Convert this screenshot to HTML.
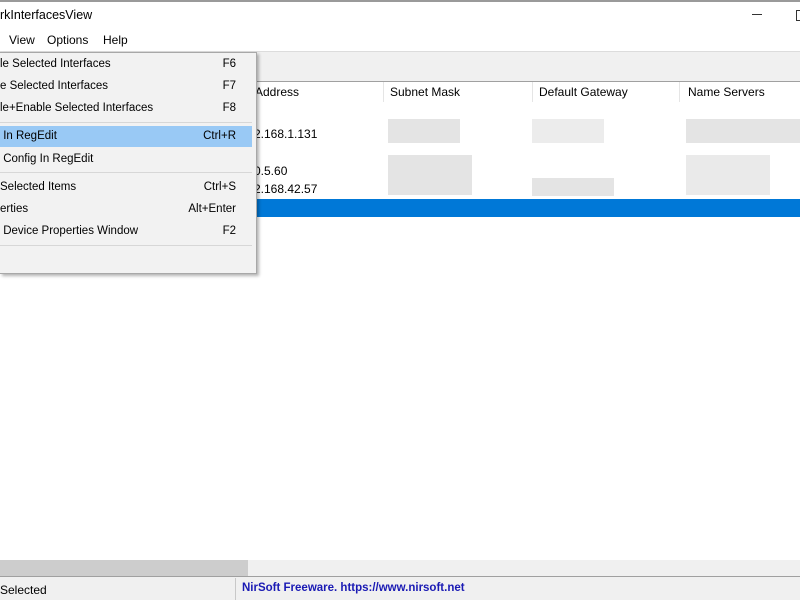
<!DOCTYPE html>
<html><head><style>
body{margin:0;width:800px;height:600px;overflow:hidden;background:#fff;font-family:"Liberation Sans",sans-serif;font-size:12px;color:#000;position:relative}
.a{position:absolute;white-space:nowrap}
.blk{position:absolute;background:#e4e4e4}
.mi{position:absolute;left:0;width:252px;height:20px;line-height:20px;font-size:11.5px}
.mi .k{position:absolute;right:16px;top:0}
</style></head><body>
<div class="a" style="left:0;top:0;width:800px;height:2px;background:#9a9a9a"></div>
<div class="a" style="left:0;top:8px;font-size:12.5px">rkInterfacesView</div>
<div class="a" style="left:752px;top:14px;width:10px;height:1px;background:#333"></div>
<div class="a" style="left:796px;top:10px;width:8px;height:9px;border:1px solid #333"></div>
<div class="a" style="left:9px;top:33px">View</div>
<div class="a" style="left:47px;top:33px">Options</div>
<div class="a" style="left:103px;top:33px">Help</div>
<div class="a" style="left:0;top:51px;width:800px;height:29px;background:#f0f0f0;border-top:1px solid #dcdcdc;border-bottom:1px solid #a0a0a0"></div>
<div class="a" style="left:255px;top:85px">Address</div>
<div class="a" style="left:383px;top:82px;width:1px;height:20px;background:#e5e5e5"></div>
<div class="a" style="left:390px;top:85px">Subnet Mask</div>
<div class="a" style="left:532px;top:82px;width:1px;height:20px;background:#e5e5e5"></div>
<div class="a" style="left:539px;top:85px">Default Gateway</div>
<div class="a" style="left:679px;top:82px;width:1px;height:20px;background:#e5e5e5"></div>
<div class="a" style="left:688px;top:85px">Name Servers</div>
<div class="a" style="left:254px;top:127px">2.168.1.131</div>
<div class="a" style="left:254px;top:164px">0.5.60</div>
<div class="a" style="left:254px;top:182px">2.168.42.57</div>
<div class="blk" style="left:388px;top:119px;width:72px;height:24px"></div>
<div class="blk" style="left:532px;top:119px;width:72px;height:24px;background:#ececec"></div>
<div class="blk" style="left:686px;top:119px;width:114px;height:24px"></div>
<div class="blk" style="left:388px;top:155px;width:84px;height:40px"></div>
<div class="blk" style="left:532px;top:178px;width:82px;height:18px"></div>
<div class="blk" style="left:686px;top:155px;width:84px;height:40px;background:#eaeaea"></div>
<div class="a" style="left:0;top:199px;width:800px;height:18px;background:#0078d7"></div>
<div class="a" style="left:0;top:560px;width:800px;height:16px;background:#f0f0f0;border-bottom:1px solid #a0a0a0"></div>
<div class="a" style="left:0;top:560px;width:248px;height:16px;background:#cdcdcd"></div>
<div class="a" style="left:0;top:577px;width:800px;height:23px;background:#f0f0f0"></div>
<div class="a" style="left:235px;top:578px;width:1px;height:22px;background:#c8c8c8"></div>
<div class="a" style="left:0;top:583px">Selected</div>
<div class="a" style="left:242px;top:582px;color:#1a1ab4;font-weight:bold;font-size:11.5px">NirSoft Freeware. https://www.nirsoft.net</div>
<div class="a" style="left:0;top:52px;width:256px;height:220px;background:#f2f2f2;border:1px solid #a8a8a8;border-left:none;box-shadow:2px 2px 3px rgba(0,0,0,.3)">
<div class="mi" style="top:1px">le Selected Interfaces<span class="k">F6</span></div>
<div class="mi" style="top:23px">e Selected Interfaces<span class="k">F7</span></div>
<div class="mi" style="top:45px">le+Enable Selected Interfaces<span class="k">F8</span></div>
<div class="a" style="left:0;top:69px;width:252px;height:1px;background:#d7d7d7"></div>
<div class="mi" style="top:73px;background:#99c9f5;height:21px;line-height:21px">&nbsp;In RegEdit<span class="k">Ctrl+R</span></div>
<div class="mi" style="top:96px">&nbsp;Config In RegEdit</div>
<div class="a" style="left:0;top:119px;width:252px;height:1px;background:#d7d7d7"></div>
<div class="mi" style="top:124px">Selected Items<span class="k">Ctrl+S</span></div>
<div class="mi" style="top:146px">erties<span class="k">Alt+Enter</span></div>
<div class="mi" style="top:168px">&nbsp;Device Properties Window<span class="k">F2</span></div>
<div class="a" style="left:0;top:192px;width:252px;height:1px;background:#d7d7d7"></div>
</div>
</body></html>
